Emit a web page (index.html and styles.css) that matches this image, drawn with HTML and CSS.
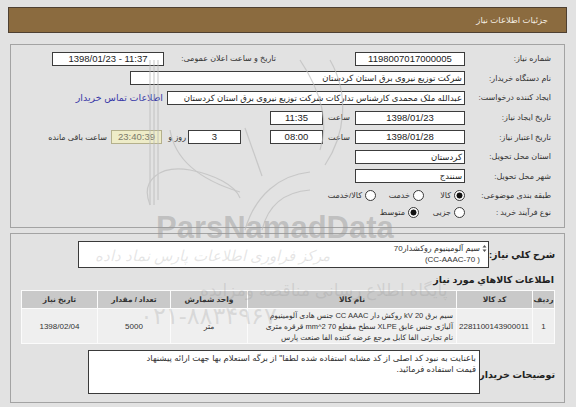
FILE: index.html
```html
<!DOCTYPE html>
<html lang="fa" dir="rtl">
<head>
<meta charset="utf-8">
<title>جزئیات اطلاعات نیاز</title>
<link rel="stylesheet" href="styles.css">
</head>
<body>
<div class="page">
  <div class="header">جزئیات اطلاعات نیاز</div>

  <div class="box box1">
    <div class="row">
      <div class="label">شماره نیاز:</div>
      <div class="field w110 center">1198007017000005</div>
      <div class="label2">تاریخ و ساعت اعلان عمومی:</div>
      <div class="field w112 center ltr">1398/01/23 - 11:37</div>
    </div>
    <div class="row">
      <div class="label">نام دستگاه خریدار:</div>
      <div class="field w335 fa">شرکت توزیع نیروی برق استان کردستان</div>
    </div>
    <div class="row">
      <div class="label">ایجاد کننده درخواست:</div>
      <div class="field w298 fa">عبدالله ملک محمدی کارشناس تدارکات شرکت توزیع نیروی برق استان کردستان</div>
      <a class="link" href="#">اطلاعات تماس خریدار</a>
    </div>
    <div class="row">
      <div class="label">تاریخ ایجاد نیاز:</div>
      <div class="field w110 center">1398/01/23</div>
      <div class="hour">ساعت</div>
      <div class="field w53 center">11:35</div>
    </div>
    <div class="row">
      <div class="label">تاریخ اعتبار نیاز:</div>
      <div class="field w110 center">1398/01/28</div>
      <div class="hour">ساعت</div>
      <div class="field w53 center">08:00</div>
      <div class="field w53 center days">3</div>
      <div class="dayword">روز و</div>
      <div class="field countdown center">23:40:39</div>
      <div class="remain">ساعت باقی مانده</div>
    </div>
    <div class="row">
      <div class="label">استان محل تحویل:</div>
      <div class="field w110 fa">کردستان</div>
    </div>
    <div class="row">
      <div class="label">شهر محل تحویل:</div>
      <div class="field w110 fa">سنندج</div>
    </div>
    <div class="row r8">
      <div class="label">طبقه بندی موضوعی:</div>
      <div class="opt o41"><span class="radio on"></span><span>کالا</span></div>
      <div class="opt o48"><span class="radio"></span><span>خدمت</span></div>
      <div class="opt"><span class="radio"></span><span>کالا/خدمت</span></div>
    </div>
    <div class="row r9">
      <div class="label">نوع فرآیند خرید :</div>
      <div class="opt o46"><span class="radio"></span><span>جزیی</span></div>
      <div class="opt"><span class="radio on"></span><span>متوسط</span></div>
    </div>
  </div>

  <div class="box box2">
    <div class="row2">
      <div class="blabel">شرح کلي نیاز:</div>
      <div class="textarea ta1">
        <div>سیم آلومینیوم روکشدار70</div>
        <div><span dir="ltr">(CC-AAAC-70 )</span></div>
        <svg class="spin" width="5" height="9" viewBox="0 0 5 9"><path d="M2.5 1 L4.5 3.5 L0.5 3.5 Z M2.5 8 L4.5 5.5 L0.5 5.5 Z" fill="#555"/></svg>
      </div>
    </div>

    <div class="heading">اطلاعات کالاهاي مورد نياز</div>

    <table class="items">
      <thead>
        <tr>
          <th class="c1">ردیف</th>
          <th class="c2">کد کالا</th>
          <th class="c3">نام کالا</th>
          <th class="c4">واحد شمارش</th>
          <th class="c5">تعداد / مقدار</th>
          <th class="c6">تاریخ نیاز</th>
        </tr>
      </thead>
      <tbody>
        <tr>
          <td class="num">1</td>
          <td class="num">2281100143900011</td>
          <td class="name">سیم برق 20 kV روکش دار CC AAAC جنس هادی آلومینیوم<br>آلیاژی جنس عایق XLPE سطح مقطع 70 mm^2 قرقره متری<br>نام تجارتی الفا کابل مرجع عرضه کننده الفا صنعت پارس</td>
          <td class="unit">متر</td>
          <td class="num">5000</td>
          <td class="num">1398/02/04</td>
        </tr>
      </tbody>
    </table>

    <div class="row2 desc">
      <div class="blabel dl">توضیحات خریدار:</div>
      <div class="textarea ta2">
        <div>باعنایت به نبود کد اصلی از کد مشابه استفاده شده لطفا" از برگه استعلام بها جهت ارائه پیشنهاد</div>
        <div>قیمت استفاده فرمائید.</div>
      </div>
    </div>
  </div>

  <div class="wm">
    <svg class="wm-logo" width="576" height="407" viewBox="0 0 576 407">
      <g fill="none" stroke="#bdbdbd" stroke-width="1.2" opacity="0.7">
        <path d="M150 60 V205 M154 60 V205 M158 60 V200"/>
        <path d="M170 130 C175 160 200 180 240 192"/>
        <path d="M245 128 L262 176"/>
        <path d="M150 205 C140 180 160 165 190 170 C215 175 235 185 240 198"/>
        <path d="M245 230 C255 195 280 175 310 172"/>
        <path d="M262 230 C268 205 285 192 310 190"/>
        <path d="M300 60 C320 90 330 120 320 150"/>
        <path d="M330 60 C350 95 345 135 325 165"/>
      </g>
    </svg>
    <div class="wm-brand">ParsNamadData</div>
    <div class="wm-l1">مرکز فراوری اطلاعات پارس نماد داده</div>
    <div class="wm-l2">پایگاه اطلاع رسانی مناقصه ومزایده</div>
    <div class="wm-l3">۰۲۱-۸۸۳۴۹۶۷۰</div>
  </div>
</div>
</body>
</html>
```

FILE: styles.css
```css
html, body {
  margin: 0;
  padding: 0;
}

body {
  background: #e2e2e2;
  font-family: "Liberation Sans", "DejaVu Sans", sans-serif;
  font-size: 8px;
  color: #222;
}

.page {
  position: relative;
  width: 576px;
  height: 407px;
  overflow: hidden;
  direction: rtl;
}

.header {
  margin: 7px 9px 0 8px;
  height: 26px;
  box-sizing: border-box;
  background: #8b6b3f;
  border: 1px solid #4e4032;
  color: #f4ede2;
  padding-right: 18px;
  display: flex;
  align-items: center;
  font-size: 8.5px;
}

.box {
  border: 1px solid #a3a3a3;
  margin: 0 11px 0 10px;
  box-sizing: border-box;
}

.box1 {
  margin-top: 11px;
  height: 184px;
  padding-top: 4px;
}

.box2 {
  margin-top: 5px;
  height: 170px;
  padding-top: 7px;
}

.row {
  display: flex;
  align-items: center;
  height: 19.6px;
}

.row.r8 { height: 18px; }
.row.r9 { height: 17px; }

.label {
  flex: none;
  width: 99px;
  box-sizing: border-box;
  padding-right: 13px;
  white-space: nowrap;
  color: #333;
}

.label2 {
  flex: none;
  width: 112px;
  margin-right: 79px;
  white-space: nowrap;
  color: #333;
}

.field {
  flex: none;
  height: 14px;
  box-sizing: border-box;
  border: 1px solid #3c3c3c;
  background: #fff;
  line-height: 12px;
  padding: 0 2px;
  white-space: nowrap;
  overflow: hidden;
  font-size: 9.5px;
  color: #222;
}

.field.fa { font-size: 8.5px; }

.center { text-align: center; }
.ltr { direction: ltr; }

.w110 { width: 110px; }
.w112 { width: 112px; }
.w335 { width: 335px; }
.w298 { width: 298px; }
.w53 { width: 53px; }

.link {
  flex: none;
  margin-right: 4px;
  color: #3a3aa8;
  text-decoration: none;
  white-space: nowrap;
  font-size: 9.5px;
}

.hour {
  flex: none;
  width: 32px;
  text-align: center;
  color: #333;
}

.days { margin-right: 29px; }

.dayword {
  flex: none;
  width: 26px;
  box-sizing: border-box;
  padding-right: 2px;
  white-space: nowrap;
  color: #333;
}

.countdown {
  width: 51px;
  background: #eeecc8;
  border-color: #b4b08c;
  color: #7a7a6a;
}

.remain {
  flex: none;
  margin-right: 4px;
  white-space: nowrap;
  color: #333;
}

.opt {
  flex: none;
  display: flex;
  align-items: center;
  gap: 3px;
  color: #333;
  white-space: nowrap;
}

.o41 { width: 41px; }
.o48 { width: 48px; }
.o46 { width: 46px; }

.radio {
  flex: none;
  width: 11px;
  height: 11px;
  box-sizing: border-box;
  border-radius: 50%;
  border: 1px solid #3a3a3a;
  background: #fff;
}

.radio.on {
  background: radial-gradient(circle, #111 0 2.7px, #fff 3.3px);
}

.row2 {
  display: flex;
  align-items: center;
}

.blabel {
  flex: none;
  width: 75px;
  box-sizing: border-box;
  padding-right: 9px;
  font-weight: bold;
  font-size: 9.5px;
  line-height: 12px;
  white-space: nowrap;
  color: #222;
}

.textarea {
  position: relative;
  flex: none;
  box-sizing: border-box;
  border: 1px solid #3a3a3a;
  background: #fff;
  color: #333;
  line-height: 10.5px;
}

.ta1 {
  width: 411px;
  height: 27px;
  padding: 2px 8px 0 4px;
}

.spin {
  position: absolute;
  right: 1px;
  top: 2px;
}

.heading {
  margin-top: 6px;
  padding-right: 10px;
  height: 12px;
  line-height: 12px;
  font-weight: bold;
  font-size: 9.5px;
  color: #222;
}

.items {
  margin: 4px 9px 0 10px;
  width: 534px;
  border-collapse: separate;
  border-spacing: 1px;
  background: #fbfbfb;
  table-layout: fixed;
  font-size: 8px;
}

.items th {
  background: #c9c9c9;
  height: 17px;
  padding: 0;
  font-weight: bold;
  color: #333;
  font-size: 7.5px;
}

.items td {
  background: #efefef;
  height: 34px;
  padding: 0 3px;
  text-align: center;
  color: #333;
}

.items td.name {
  text-align: right;
  line-height: 11px;
  font-size: 7.5px;
  white-space: nowrap;
  overflow: hidden;
}

.items td.unit { font-size: 7.5px; }

.c1 { width: 21px; }
.c2 { width: 75px; }
.c3 { width: 208px; }
.c4 { width: 76px; }
.c5 { width: 72px; }
.c6 { width: 75px; }

.desc {
  margin-top: 6px;
  align-items: flex-start;
}

.dl {
  width: 84px;
  padding-top: 19px;
}

.ta2 {
  width: 392px;
  height: 44px;
  padding: 2px 3px 0 3px;
  font-size: 8.5px;
}

/* watermark overlay */
.wm {
  position: absolute;
  inset: 0;
  pointer-events: none;
}

.wm-logo {
  position: absolute;
  left: 0;
  top: 0;
}

.wm-brand {
  position: absolute;
  left: 156px;
  top: 210px;
  direction: ltr;
  font-family: "Liberation Sans", sans-serif;
  font-weight: bold;
  font-size: 31px;
  color: rgba(150, 150, 150, 0.45);
}

.wm-l1 {
  position: absolute;
  left: 95px;
  top: 247px;
  font-size: 15px;
  font-style: italic;
  color: rgba(150, 150, 150, 0.25);
}

.wm-l2 {
  position: absolute;
  left: 200px;
  top: 280px;
  font-size: 17px;
  color: rgba(150, 150, 150, 0.25);
}

.wm-l3 {
  position: absolute;
  left: 140px;
  top: 302px;
  font-size: 24px;
  color: rgba(150, 150, 150, 0.25);
}
```
